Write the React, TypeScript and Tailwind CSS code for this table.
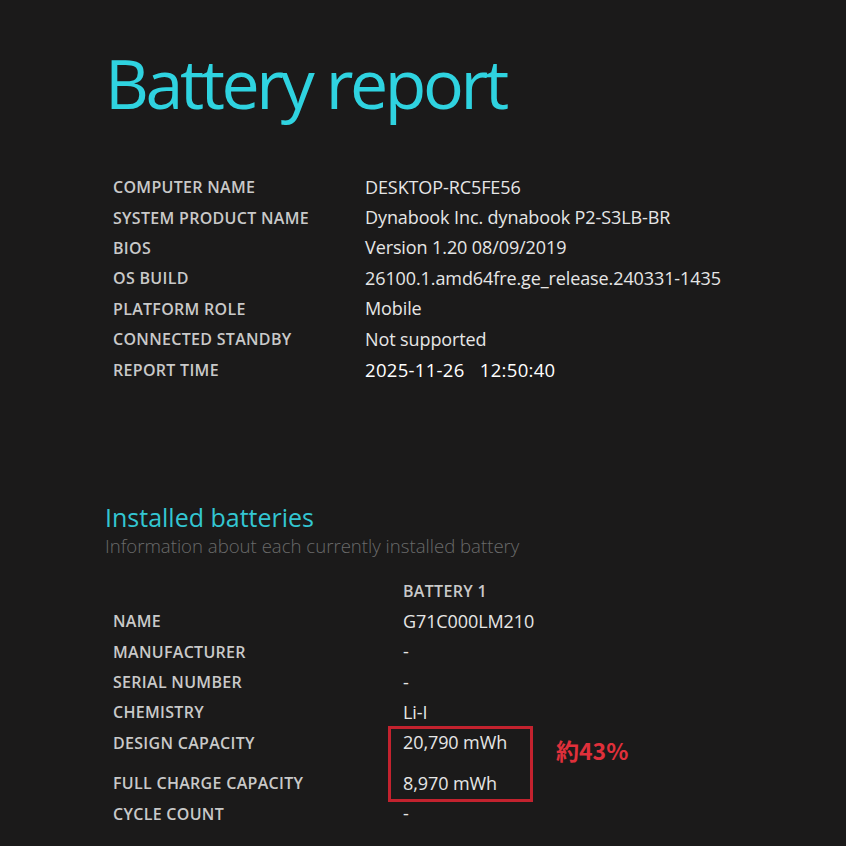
const systemInfo: [string, string][] = [
  ['COMPUTER NAME', 'DESKTOP-RC5FE56'],
  ['SYSTEM PRODUCT NAME', 'Dynabook Inc. dynabook P2-S3LB-BR'],
  ['BIOS', 'Version 1.20 08/09/2019'],
  ['OS BUILD', '26100.1.amd64fre.ge_release.240331-1435'],
  ['PLATFORM ROLE', 'Mobile'],
  ['CONNECTED STANDBY', 'Not supported'],
];

function Label({ children }: { children: React.ReactNode }) {
  return (
    <span className="text-[16px] font-semibold tracking-[0.3px] text-[#c9c9c9]">{children}</span>
  );
}

function Value({ children }: { children: React.ReactNode }) {
  return <span className="text-[18px] text-[#e6e6e6] tracking-[-0.1px]">{children}</span>;
}

function Row({ label, value, col }: { label: string; value: React.ReactNode; col: string }) {
  return (
    <div className={`grid ${col} h-[30.4px] items-center`}>
      <Label>{label}</Label>
      <Value>{value}</Value>
    </div>
  );
}

export default function App() {
  return (
    <div
      className="w-[846px] h-[846px] overflow-hidden bg-[#1b1a1a]"
      style={{ fontFamily: '"Open Sans", "Noto Sans", sans-serif' }}
    >
      <div className="pl-[105px] pt-[38px]">
        <h1 className="text-[68px] leading-[90px] text-[#2fd3e0] tracking-[-3.4px]">Battery report</h1>

        {/* system info */}
        <div className="mt-[44px] pl-[8px]">
          {systemInfo.map(([k, v]) => (
            <Row key={k} label={k} value={v} col="grid-cols-[252px_1fr]" />
          ))}
          <div className="grid grid-cols-[252px_1fr] h-[30.4px] items-center">
            <Label>REPORT TIME</Label>
            <span className="text-[18.5px] font-medium tracking-[0.3px] text-white">
              2025-11-26&nbsp;&nbsp;&nbsp;12:50:40
            </span>
          </div>
        </div>

        {/* installed batteries */}
        <div className="mt-[117px]">
          <h2 className="text-[25px] leading-[30px] text-[#33c6d2]">Installed batteries</h2>
          <p className="text-[18.6px] leading-[28px] font-light text-[#6a6a6a]">
            Information about each currently installed battery
          </p>
        </div>

        <div className="mt-[16px] pl-[8px]">
          <div className="grid grid-cols-[290px_1fr] h-[30.4px] items-center">
            <span />
            <Label>BATTERY 1</Label>
          </div>
          <Row label="NAME" value="G71C000LM210" col="grid-cols-[290px_1fr]" />
          <Row label="MANUFACTURER" value="-" col="grid-cols-[290px_1fr]" />
          <Row label="SERIAL NUMBER" value="-" col="grid-cols-[290px_1fr]" />
          <Row label="CHEMISTRY" value="Li-I" col="grid-cols-[290px_1fr]" />
          <div className="relative">
            <Row label="DESIGN CAPACITY" value="20,790 mWh" col="grid-cols-[290px_1fr]" />
            <div className="h-[10px]" />
            <Row label="FULL CHARGE CAPACITY" value="8,970 mWh" col="grid-cols-[290px_1fr]" />
            {/* annotation overlay */}
            <div className="absolute left-[275px] top-[-2px] w-[145px] h-[76px] border-[3px] border-[#c3222e]" />
            <span
              className="absolute left-[443px] top-[5px] text-[23px] font-bold text-[#e0303b]"
              style={{ fontFamily: '"Noto Sans CJK JP", "Noto Sans", sans-serif' }}
            >
              約43%
            </span>
          </div>
          <Row label="CYCLE COUNT" value="-" col="grid-cols-[290px_1fr]" />
        </div>
      </div>
    </div>
  );
}
